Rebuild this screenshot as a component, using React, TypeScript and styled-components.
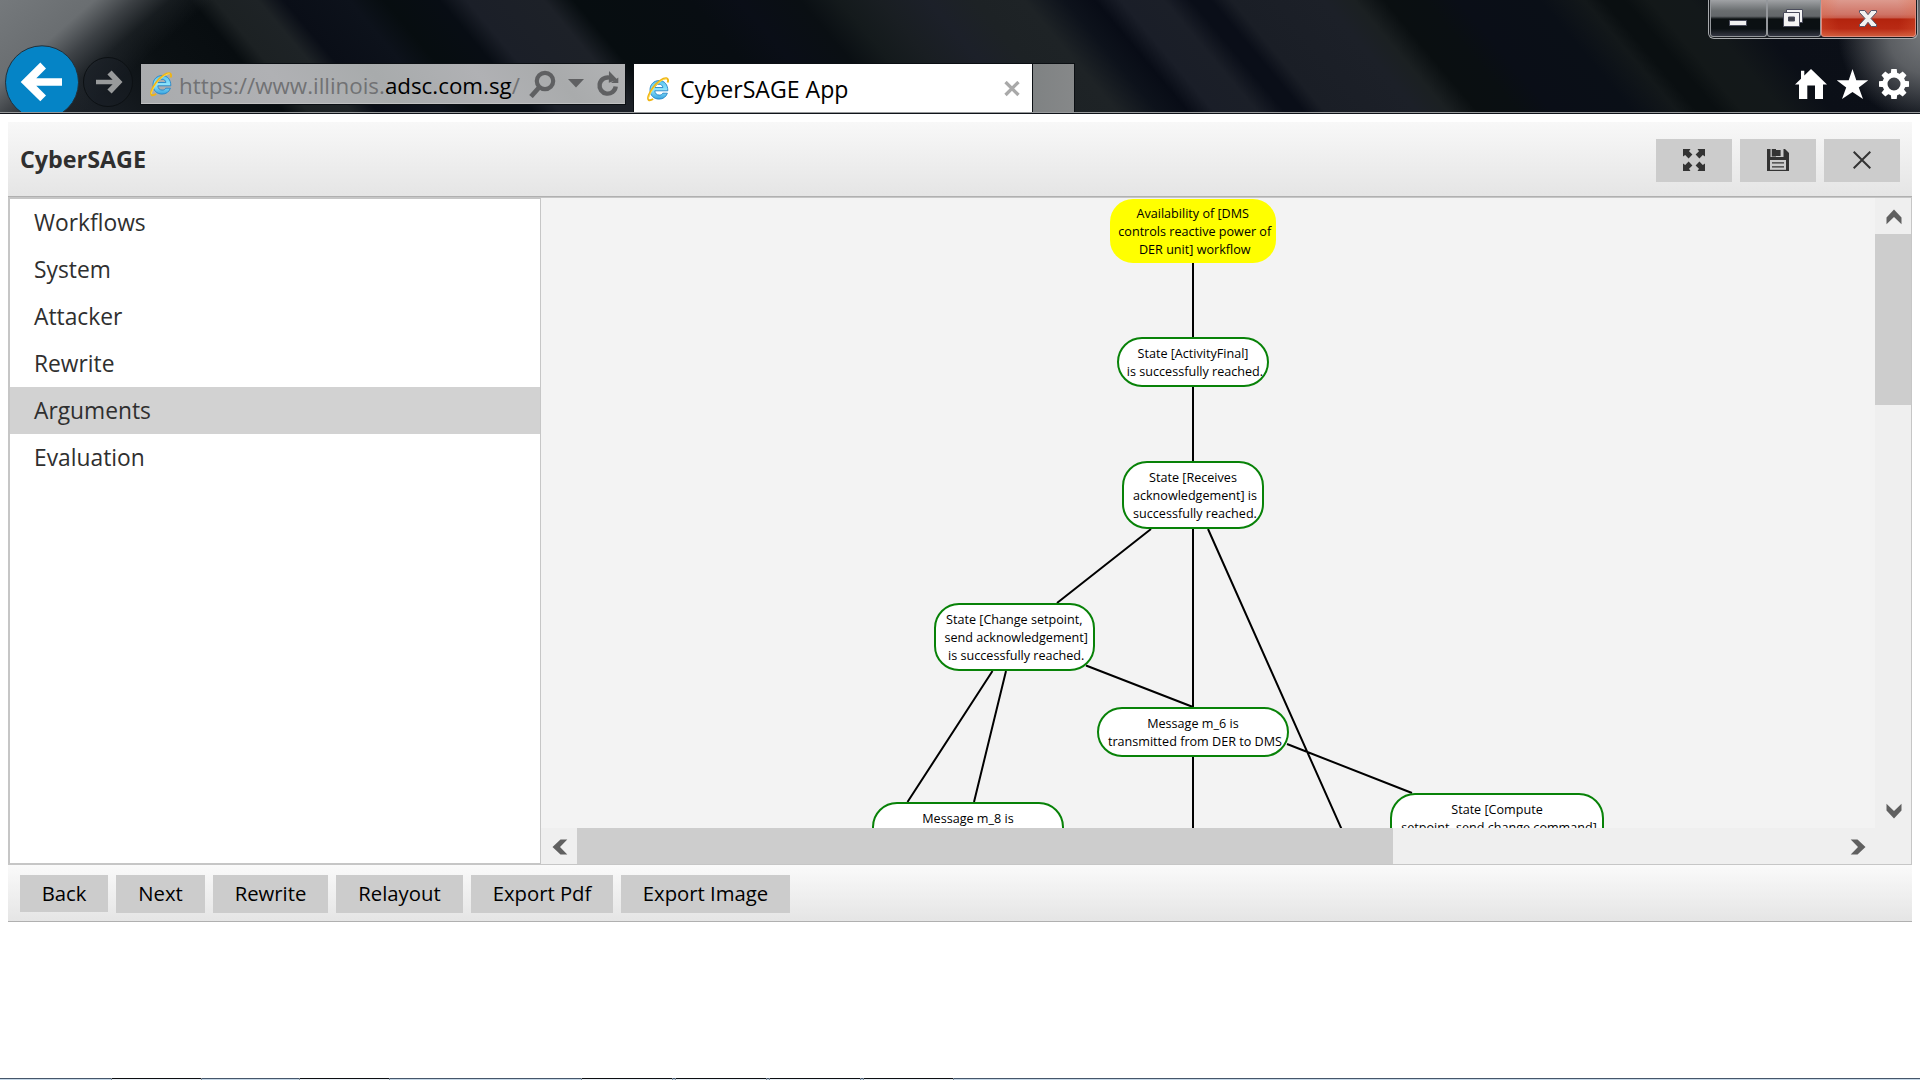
import React from 'react';
import styled, { createGlobalStyle, css } from 'styled-components';

const GlobalStyle = createGlobalStyle`
  * { box-sizing: border-box; }
  html, body { margin: 0; background: #fff; }
  body { font-family: "Open Sans", "Noto Sans", sans-serif; color: #2f2f2f; overflow: hidden; }
  svg { display: block; flex: none; }
`;

/* Diagonal streaks of the glass frame: [x along the top edge, colour]. */
const streaks: [number, string][] = [
  [-90, '#1f242a'], [0, '#1a1f25'], [110, '#0b1013'], [190, '#080d10'], [215, '#1c2123'], [258, '#1e2326'],
  [285, '#0a0e17'], [350, '#0d121b'], [385, '#070d10'], [440, '#080d14'], [468, '#1b1f28'], [545, '#1d2128'],
  [575, '#070d10'], [690, '#080d12'], [740, '#0a0e17'], [800, '#0a0f13'], [840, '#141a1c'], [880, '#191e22'],
  [930, '#1c2029'], [975, '#1d2225'], [1025, '#1e2326'], [1065, '#0d121b'], [1095, '#080c16'], [1122, '#1a1e28'],
  [1165, '#1b1f28'], [1192, '#0a0e18'], [1212, '#0a0e18'], [1232, '#1a1e26'], [1325, '#1c2028'], [1355, '#1b2022'],
  [1385, '#0a0f11'], [1425, '#0a0f12'], [1460, '#0a0e17'], [1540, '#0a0f17'], [1585, '#13181a'], [1605, '#0a0f11'],
  [1625, '#0a0f11'], [1650, '#131819'], [1690, '#13181a'], [1740, '#0b0f17'], [1920, '#0c1018'],
];
const streakStops = streaks.map(([x, c]) => `${c} ${(x * 0.766 + 72).toFixed(0)}px`).join(', ');

const Screen = styled.div`
  width: 1920px; height: 1080px; display: flex; flex-direction: column; background: #fff; overflow: hidden;
`;

/* ---- browser frame ---- */
const Frame = styled.header`
  height: 114px; flex: none; display: flex; align-items: flex-start; overflow: hidden; position: relative;
  border-bottom: 1px solid #10141a;
  background:
    linear-gradient(139deg, #75797c 0, #6a6e71 62px, rgba(72, 76, 80, .8) 88px, rgba(40, 45, 49, .45) 112px, transparent 140px),
    radial-gradient(ellipse 92px 90px at 1930px 34px, #777a7d 0, #5b5e62 45%, transparent 100%),
    linear-gradient(50deg, ${streakStops});
`;
const FrameEdge = styled.div`
  position: absolute; left: 0; right: 0; bottom: 0; height: 1px; background: #97999b;
`;
const NavButtons = styled.div`width: 141px; height: 113px; flex: none;`;
const AddressBar = styled.div`
  width: 484px; height: 40px; margin-top: 64px; padding: 0 5px 0 8px; flex: none; display: flex; align-items: center;
  background: linear-gradient(50deg, #a9abad, #b0b1b4 30%, #a8abac 50%, #b0b1b4 70%, #a9abac 85%, #b2b3b5);
  border-bottom: 1px solid #c0c1c2; box-shadow: 0 0 0 1px #0b0f13;
`;
const Url = styled.div`
  width: 348px; margin: 4px 0 0 6px; font-size: 22.35px; line-height: 30px; color: #717274; white-space: nowrap;
  b { font-weight: 400; color: #000; }
`;
const AddressTools = styled.div`display: flex; align-items: center; gap: 12px; margin-left: 5px;`;
const Tab = styled.div`
  width: 398px; height: 49px; margin: 64px 0 0 9px; padding: 0 12px 0 12px; flex: none; display: flex; align-items: center;
  background: #fff; box-shadow: 0 0 0 1px #0b0f13; color: #000;
`;
const TabTitle = styled.div`flex: 1; margin: 1px 0 0 10px; font-size: 23.1px; line-height: 30px; white-space: nowrap;`;
const NewTab = styled.div`
  width: 41px; height: 49px; margin: 64px 0 0 1px; flex: none; background: linear-gradient(90deg, #7f8283, #868889);
  box-shadow: 0 0 0 1px #0b0f13;
`;
const FrameRight = styled.div`
  flex: 1; display: flex; flex-direction: column; align-items: flex-end; justify-content: space-between; height: 100px;
`;
const WindowButtons = styled.div`
  display: flex; width: 210px; height: 39px; margin-right: 2px; border: 1px solid #a8aaad; border-top: 0;
  border-radius: 0 0 6px 6px; box-shadow: inset 0 0 0 1px #15181c; padding: 0 1px 1px; overflow: hidden;
`;
const WindowButton = styled.div<{ $w: number; $close?: boolean }>`
  width: ${p => p.$w}px; height: 37px; display: flex; align-items: center; justify-content: center;
  border: 1px solid #94979b; border-top: 0; border-radius: 0 0 3px 3px;
  ${p => p.$close ? css`
    border-color: #e08a7c; padding-right: 2px;
    background: radial-gradient(ellipse 52px 60px at 50% 45%, transparent 60%, rgba(226, 100, 60, .35) 100%), linear-gradient(#dd9a8e 0, #cf7365 40%, #c85c4c 49%, #b3230d 53%, #b92a14 80%, #cf5a3b 100%);
  ` : css`padding-right: 2px; background: linear-gradient(#a0a2a5 0, #696d6f 30%, #63676a 45%, #0b1012 53%, #0b1013 80%, #343743 100%);`}
`;
const FrameTools = styled.div`display: flex; gap: 10px; margin-right: 11px; height: 30px; margin-bottom: 1px;`;

/* ---- application ---- */
const Application = styled.main`margin: 8px 8px 0; flex: none;`;
const Header = styled.div`
  height: 75px; display: flex; align-items: center; justify-content: space-between; padding: 0 12px;
  background: linear-gradient(#f8f8f8, #e5e5e5); border-bottom: 1px solid #b0b0b0;
`;
const Title = styled.h1`margin: 0; font-size: 23.3px; line-height: 32px; font-weight: 700; color: #2f2f2f;`;
const HeaderButtons = styled.div`display: flex; gap: 8px; margin-top: 3px;`;
const HeaderButton = styled.div`
  width: 76px; height: 43px; padding-bottom: 1px; background: #ccc; color: #333;
  display: flex; align-items: center; justify-content: center;
`;
const Body = styled.div`height: 668px; display: flex; border: 1px solid #c6c6c6;`;
const Sidebar = styled.nav`width: 532px; flex: none; background: #fff; border: 1px solid #c6c6c6;`;
const MenuItem = styled.div<{ $active?: boolean }>`
  height: 47px; padding-left: 24px; font-size: 22.8px; line-height: 48px; background: ${p => p.$active ? '#d2d2d2' : '#fff'};
`;
const View = styled.div`
  flex: 1; display: grid; grid-template-columns: 1fr 36px; grid-template-rows: 630px 36px; background: #efefef;
`;
const Canvas = styled.div`position: relative; overflow: hidden; background: #f3f3f3;`;
const Node = styled.div<{ $x: number; $y: number; $w: number; $h: number; $root?: boolean }>`
  position: absolute; left: ${p => p.$x - 541}px; top: ${p => p.$y - 198}px; width: ${p => p.$w}px; height: ${p => p.$h}px;
  border: 2px solid ${p => p.$root ? '#ff0' : '#088208'}; border-radius: ${p => p.$root ? 23 : 25}px;
  background: ${p => p.$root ? '#ff0' : '#fff'};
  padding-top: ${p => p.$root ? 4 : 6}px; display: flex; flex-direction: column; align-items: center;
`;
const Line = styled.span<{ $first: boolean }>`
  flex: none; font-size: 12.6px; line-height: 18px; white-space: nowrap; color: #000; padding-left: ${p => p.$first ? 0 : 4}px;
`;
const VScroll = styled.div`display: flex; flex-direction: column; justify-content: space-between;`;
const HScroll = styled.div`display: flex; justify-content: space-between;`;
const ScrollButton = styled.div`
  width: 36px; height: 36px; padding: 2px 0 0 1px; flex: none; display: flex; align-items: center; justify-content: center;
`;
const VThumb = styled.div`height: 171px; margin-bottom: auto; background: #cdcdcd;`;
const HThumb = styled.div`width: 816px; margin-right: auto; background: #cdcdcd;`;
const Footer = styled.div`
  height: 57px; display: flex; align-items: flex-start; gap: 8px; padding: 10px 12px 0;
  background: linear-gradient(#fafafa, #e5e5e5); border-bottom: 1px solid #b0b0b0;
`;
const FooterButton = styled.div<{ $w: number; $h?: number }>`
  width: ${p => p.$w}px; height: ${p => p.$h || 38}px; background: #ccc; color: #000; font-size: 20.3px; line-height: 37px;
  text-align: center; white-space: nowrap;
`;
const Taskbar = styled.div`
  height: 2px; margin-top: auto; flex: none; display: flex; background: linear-gradient(#46566a 50%, #c6d8e8 50%);
`;
const TaskItem = styled.div<{ $gap: number; $w: number }>`
  width: ${p => p.$w}px; height: 2px; margin-left: ${p => p.$gap}px; background: linear-gradient(#0c0f12 50%, #e9f0f6 50%);
  border: solid #808b96; border-width: 0 1px;
`;

/* ---- icons ---- */
const IeLogo = () => (
  <svg width="24" height="26" viewBox="0 0 24 26" fill="none">
    <defs>
      <linearGradient id="ieBlue" x1="0" y1="0" x2="0" y2="1">
        <stop offset="0" stopColor="#59c3ee" /><stop offset=".5" stopColor="#8fe4fb" /><stop offset="1" stopColor="#3aa5e0" />
      </linearGradient>
    </defs>
    <path d="M21.800 14.800H8.800c.2 2.700 1.900 4.300 4.400 4.300 1.700 0 2.900-.7 3.600-1.900h4.600c-1.300 3.700-4.300 5.900-8.300 5.900-5.300 0-9.100-3.800-9.100-9.200 0-5.400 3.800-9.300 9.100-9.300 5.400 0 8.800 4 8.700 10.200zM8.900 11.500h8c-.3-2.100-1.800-3.300-3.900-3.300s-3.600 1.200-4.100 3.300z"
      fill="url(#ieBlue)" stroke="#2584c6" strokeWidth=".9" />
    <path d="M21.600 6.500c.9-2.300.5-3.900-1.200-4.200-3-.5-8.900 3.400-13.100 9C2.900 17.200 1 22.600 2.600 23.900c.9.700 2.600.3 4.600-.9"
      stroke="#efb414" strokeWidth="1.900" />
    <path d="M20.600 2.700c-3 0-8.300 3.700-12.300 8.800-3.700 4.700-6 9.600-5.700 11.300" stroke="#ffdf52" strokeWidth=".9" />
  </svg>
);
const NavArrows = () => (
  <svg width="141" height="113" viewBox="0 0 141 113">
    <circle cx="42" cy="82.300" r="36.500" fill="#0584c6" stroke="#22303a" strokeWidth="1" />
    <path d="M20.700 82 40.300 62.500l5.700 6L36.300 78.300H62v7.400H36.300L46 95.500l-5.700 5.800z" fill="#fff" />
    <circle cx="108" cy="82" r="24.500" fill="#1b2027" fillOpacity=".35" stroke="#0c1013" />
    <path d="M122.500 82 111.600 70.400l-4.200 4.200 5.200 5.200H96v4.400h16.600l-5.200 5.200 4.200 4.200z" fill="#989a9b" />
  </svg>
);
const Search = () => (
  <svg width="27" height="28" viewBox="0 0 27 28" fill="none" stroke="#5f6062">
    <circle cx="16" cy="11" r="8.200" strokeWidth="4.200" /><path d="M10.500 17 2 26.500" strokeWidth="4.800" />
  </svg>
);
const Caret = () => <svg width="16" height="9" viewBox="0 0 16 9"><path d="M0 0h16L8 8.500z" fill="#5f6062" /></svg>;
const Refresh = () => (
  <svg width="24" height="28" viewBox="0 0 24 28">
    <path d="M19.700 16.500a8.100 8.100 0 1 1-6.500-8.900" fill="none" stroke="#5f6062" strokeWidth="4.400" />
    <path d="M13 1 21.500 9.800 12.800 12.800z" fill="#5f6062" />
    <path d="M15 13h7.300V7.500z" fill="#5f6062" />
  </svg>
);
const Chevron = ({ dir }: { dir: number }) => (
  <svg width="16" height="16" viewBox="0 0 16 16">
    <path d="M8 .5 15.500 8.500V15.300L8 8 .5 15.300V8.500z" fill="#606060" transform={`rotate(${dir} 8 8)`} />
  </svg>
);
const gearTeeth = [0, 45, 90, 135, 180, 225, 270, 315];

type NodeData = { x: number; y: number; w: number; h: number; root?: boolean; lines: string[] };
const nodes: NodeData[] = [
  { x: 1109.5, y: 199, w: 166.500, h: 64, root: true, lines: ['Availability of [DMS', 'controls reactive power of', 'DER unit] workflow'] },
  { x: 1117, y: 337, w: 152, h: 50, lines: ['State [ActivityFinal]', 'is successfully reached.'] },
  { x: 1122, y: 461, w: 142, h: 68, lines: ['State [Receives', 'acknowledgement] is', 'successfully reached.'] },
  { x: 933.5, y: 603, w: 161.500, h: 68, lines: ['State [Change setpoint,', 'send acknowledgement]', 'is successfully reached.'] },
  { x: 1096.7, y: 707, w: 192.500, h: 50, lines: ['Message m_6 is', 'transmitted from DER to DMS'] },
  { x: 871.7, y: 802, w: 192.600, h: 50, lines: ['Message m_8 is'] },
  { x: 1390, y: 793, w: 214, h: 68, lines: ['State [Compute', 'setpoint, send change command]'] },
];
const edges = [
  'M1193 263V337', 'M1193 387V461', 'M1193 529V707', 'M1193 757V830', 'M1151 529 1057 603', 'M1208 529 1342 830',
  'M992.500 671 907.500 802', 'M1006 671 974 802', 'M1086 665.500 1193 707', 'M1287 744 1412 793',
].join('');

const menu = ['Workflows', 'System', 'Attacker', 'Rewrite', 'Arguments', 'Evaluation'];
const actions: [string, number][] = [['Back', 88], ['Next', 89], ['Rewrite', 115], ['Relayout', 127], ['Export Pdf', 142], ['Export Image', 169]];
const tasks: [number, number][] = [[111, 91], [97, 91], [191, 92], [2, 92], [2, 92], [2, 91]];

export default function App() {
  return (
    <Screen>
      <GlobalStyle />
      <Frame>
        <FrameEdge />
        <NavButtons><NavArrows /></NavButtons>
        <AddressBar>
          <IeLogo />
          <Url>https://www.illinois.<b>adsc.com.sg</b>/</Url>
          <AddressTools><Search /><Caret /><Refresh /></AddressTools>
        </AddressBar>
        <Tab>
          <IeLogo />
          <TabTitle>CyberSAGE App</TabTitle>
          <svg width="16" height="16" viewBox="0 0 16 16"><path d="M1.500 1l13 13M14.500 1l-13 13" stroke="#a9a9a9" strokeWidth="3.300" /></svg>
        </Tab>
        <NewTab />
        <FrameRight>
          <WindowButtons>
            <WindowButton $w={57}>
              <svg width="18" height="16" viewBox="0 0 18 16"><path d="M.5 10.500h17v5H.5z" fill="#f0f0f0" stroke="#4a4c5c" /></svg>
            </WindowButton>
            <WindowButton $w={54}>
              <svg width="20" height="18" viewBox="0 0 20 18" fill="#f4f4f4" stroke="#4a4c5c">
                <path d="M3.500.5h16v13h-16z" /><path d="M.5 3.500h16v14H.5z" /><path d="M5.500 8h6v4h-6z" fill="#3c3f48" />
              </svg>
            </WindowButton>
            <WindowButton $w={95} $close>
              <svg width="18" height="17" viewBox="0 0 18 17">
                <path d="M.5.5h5.300L9 4.700 12.200.5h5.300v2L12 8.500l5.500 6v2h-5.300L9 12.300 5.800 16.500H.5v-2L6 8.500.5 2.500z" fill="#f1f1f1" stroke="#565468" />
              </svg>
            </WindowButton>
          </WindowButtons>
          <FrameTools>
            <svg width="32" height="30" viewBox="1 0 32 30" fill="#fff" overflow="visible">
              <path d="M17 0 10.300 6.500V1.800H7v8L1 15.600h4V30h8.300V16.500h7.700V30h8V15.600h4z" />
            </svg>
            <svg width="32" height="30" viewBox="1 0 32 30" fill="#fff" overflow="visible">
              <path d="M16.500 0 20.300 11.300H32.300L22.800 18.500 27 30 16.500 23 6 30 10.200 18.500.7 11.300h12z" />
            </svg>
            <svg width="30" height="30" viewBox="0 0 30 30">
              <circle cx="15" cy="15" r="9" fill="none" stroke="#fff" strokeWidth="5" />
              {gearTeeth.map(a => <path key={a} d="M12.300 0h5.400l.6 5h-6.600z" fill="#fff" transform={`rotate(${a} 15 15)`} />)}
            </svg>
          </FrameTools>
        </FrameRight>
      </Frame>

      <Application>
        <Header>
          <Title>CyberSAGE</Title>
          <HeaderButtons>
            <HeaderButton>
              <svg width="22" height="22" viewBox="0 0 22 22" fill="#333">
                {[0, 90, 180, 270].map(a => (
                  <path key={a} d="M0 0h7.500L6 2.200 9.400 5.600 5.600 9.400 2.200 6 0 7.500z" transform={`rotate(${a} 11 11)`} />
                ))}
              </svg>
            </HeaderButton>
            <HeaderButton>
              <svg width="22" height="22" viewBox="0 0 22 22">
                <path d="M0 0h18l4 4v18H0z" fill="#333" />
                <path d="M3.500 0h13v8h-13z" fill="#ccc" />
                <path d="M9 1h4.600v6H9z" fill="#333" />
                <path d="M4 0h5v7.500H4z" fill="#333" /><path d="M4 0h.8v8H4z" fill="#ccc" />
                <path d="M3 11h16v9.800H3z" fill="#ccc" /><path d="M5 13.300h12v1.300H5zM5 17.300h12v1.300H5z" fill="#333" />
              </svg>
            </HeaderButton>
            <HeaderButton>
              <svg width="18" height="18" viewBox="0 0 18 18"><path d="M.7.700l16.600 16.600M17.300.700.7 17.300" stroke="#333" strokeWidth="2" /></svg>
            </HeaderButton>
          </HeaderButtons>
        </Header>
        <Body>
          <Sidebar>{menu.map(m => <MenuItem key={m} $active={m === 'Arguments'}>{m}</MenuItem>)}</Sidebar>
          <View>
            <Canvas>
              <svg width="1334" height="630" viewBox="541 198 1334 630"><path d={edges} stroke="#000" strokeWidth="2" fill="none" /></svg>
              {nodes.map(n => (
                <Node key={`${n.x}`} $x={n.x} $y={n.y} $w={n.w} $h={n.h} $root={n.root}>
                  {n.lines.map((l, i) => <Line key={l} $first={i === 0}>{l}</Line>)}
                </Node>
              ))}
            </Canvas>
            <VScroll>
              <ScrollButton><Chevron dir={0} /></ScrollButton>
              <VThumb />
              <ScrollButton><Chevron dir={180} /></ScrollButton>
            </VScroll>
            <HScroll>
              <ScrollButton><Chevron dir={-90} /></ScrollButton>
              <HThumb />
              <ScrollButton><Chevron dir={90} /></ScrollButton>
            </HScroll>
          </View>
        </Body>
        <Footer>{actions.map(([t, w], i) => <FooterButton key={t} $w={w} $h={i ? 38 : 37}>{t}</FooterButton>)}</Footer>
      </Application>
      <Taskbar>{tasks.map(([g, w], i) => <TaskItem key={i} $gap={g} $w={w} />)}</Taskbar>
    </Screen>
  );
}
